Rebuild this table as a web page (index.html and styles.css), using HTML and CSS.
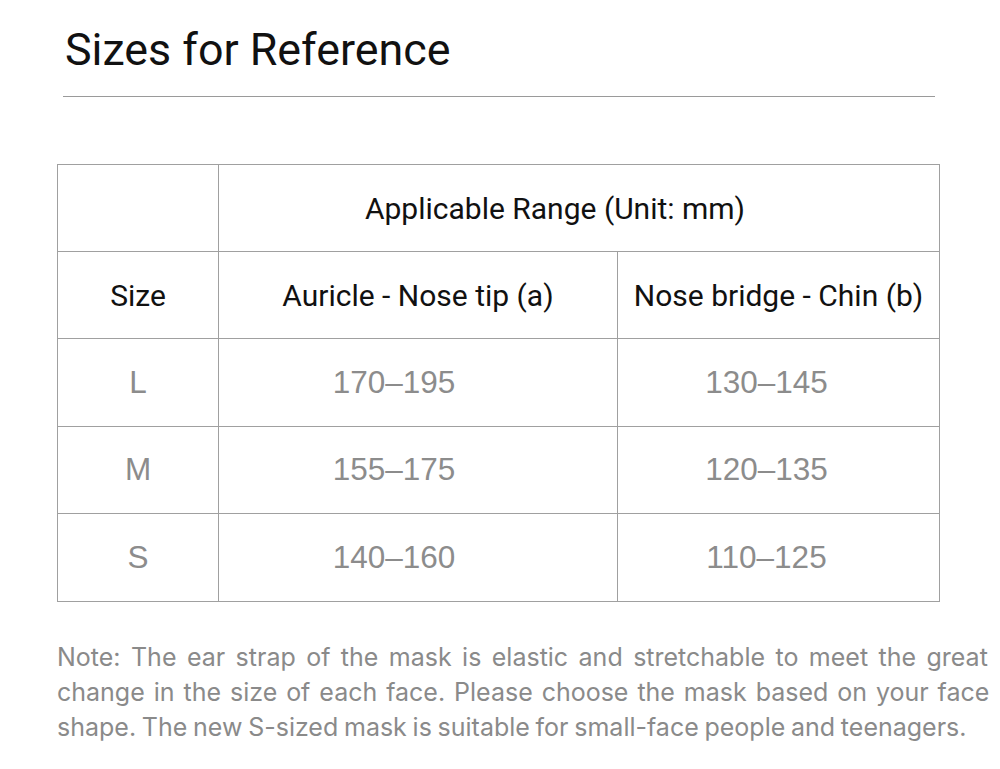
FILE: index.html
```html
<!DOCTYPE html>
<html lang="en">
<head>
<meta charset="utf-8">
<title>Sizes for Reference</title>
<link rel="stylesheet" href="styles.css">
</head>
<body>
<main class="page">
  <h1 class="title">Sizes for Reference</h1>
  <div class="rule"></div>
  <table class="sizes">
    <colgroup>
      <col class="c1"><col class="c2"><col class="c3">
    </colgroup>
    <tr class="head">
      <td></td>
      <td class="span" colspan="2">Applicable Range (Unit: mm)</td>
    </tr>
    <tr class="head">
      <td>Size</td>
      <td>Auricle - Nose tip (a)</td>
      <td>Nose bridge - Chin (b)</td>
    </tr>
    <tr class="data">
      <td>L</td>
      <td class="mid">170–195</td>
      <td class="right">130–145</td>
    </tr>
    <tr class="data">
      <td>M</td>
      <td class="mid">155–175</td>
      <td class="right">120–135</td>
    </tr>
    <tr class="data">
      <td>S</td>
      <td class="mid">140–160</td>
      <td class="right">110–125</td>
    </tr>
  </table>
  <p class="note"><span class="line l1">Note: The ear strap of the mask is elastic and stretchable to meet the great</span><span class="line l2">change in the size of each face. Please choose the mask based on your face</span><span class="line l3">shape. The new S-sized mask is suitable for small-face people and teenagers.</span></p>
</main>
</body>
</html>
```

FILE: styles.css
```css
html, body {
  margin: 0;
  padding: 0;
  background: #ffffff;
}

.page {
  width: 1000px;
  height: 769px;
  overflow: hidden;
  padding-top: 24px;
  box-sizing: border-box;
}

.title {
  margin: 0 0 0 65px;
  font-family: Roboto, "Liberation Sans", sans-serif;
  font-weight: 400;
  font-size: 44.8px;
  line-height: 52px;
  color: #111111;
}

.rule {
  margin: 20px 0 0 63px;
  width: 872px;
  height: 1px;
  background: #9a9a9a;
}

.sizes {
  margin: 67px 0 0 57px;
  width: 882px;
  border-collapse: collapse;
  table-layout: fixed;
}

.c1 { width: 161px; }
.c2 { width: 399px; }
.c3 { width: 322px; }

.sizes td {
  border: 1px solid #a0a0a0;
  text-align: center;
  vertical-align: middle;
  padding: 0;
}

.head td {
  height: 86px;
  font-family: Roboto, "Liberation Sans", sans-serif;
  font-size: 30px;
  color: #111111;
}

.head td.span {
  padding-right: 48px;
}

.data td {
  height: 86.5px;
  font-family: "Liberation Sans", Arial, sans-serif;
  font-size: 31.5px;
  color: #8c8c8c;
}

.data td.mid {
  padding-right: 48px;
}

.data td.right {
  padding-right: 24px;
}

.note {
  margin: 38px 0 0 57px;
  font-family: Inter, "Noto Sans", sans-serif;
  font-size: 25px;
  line-height: 35px;
  color: #8a8a8a;
  white-space: nowrap;
}

.line {
  display: block;
}

.l1 { word-spacing: 3.4px; }
.l2 { word-spacing: 1.9px; }
.l3 { word-spacing: -1.3px; }
```
